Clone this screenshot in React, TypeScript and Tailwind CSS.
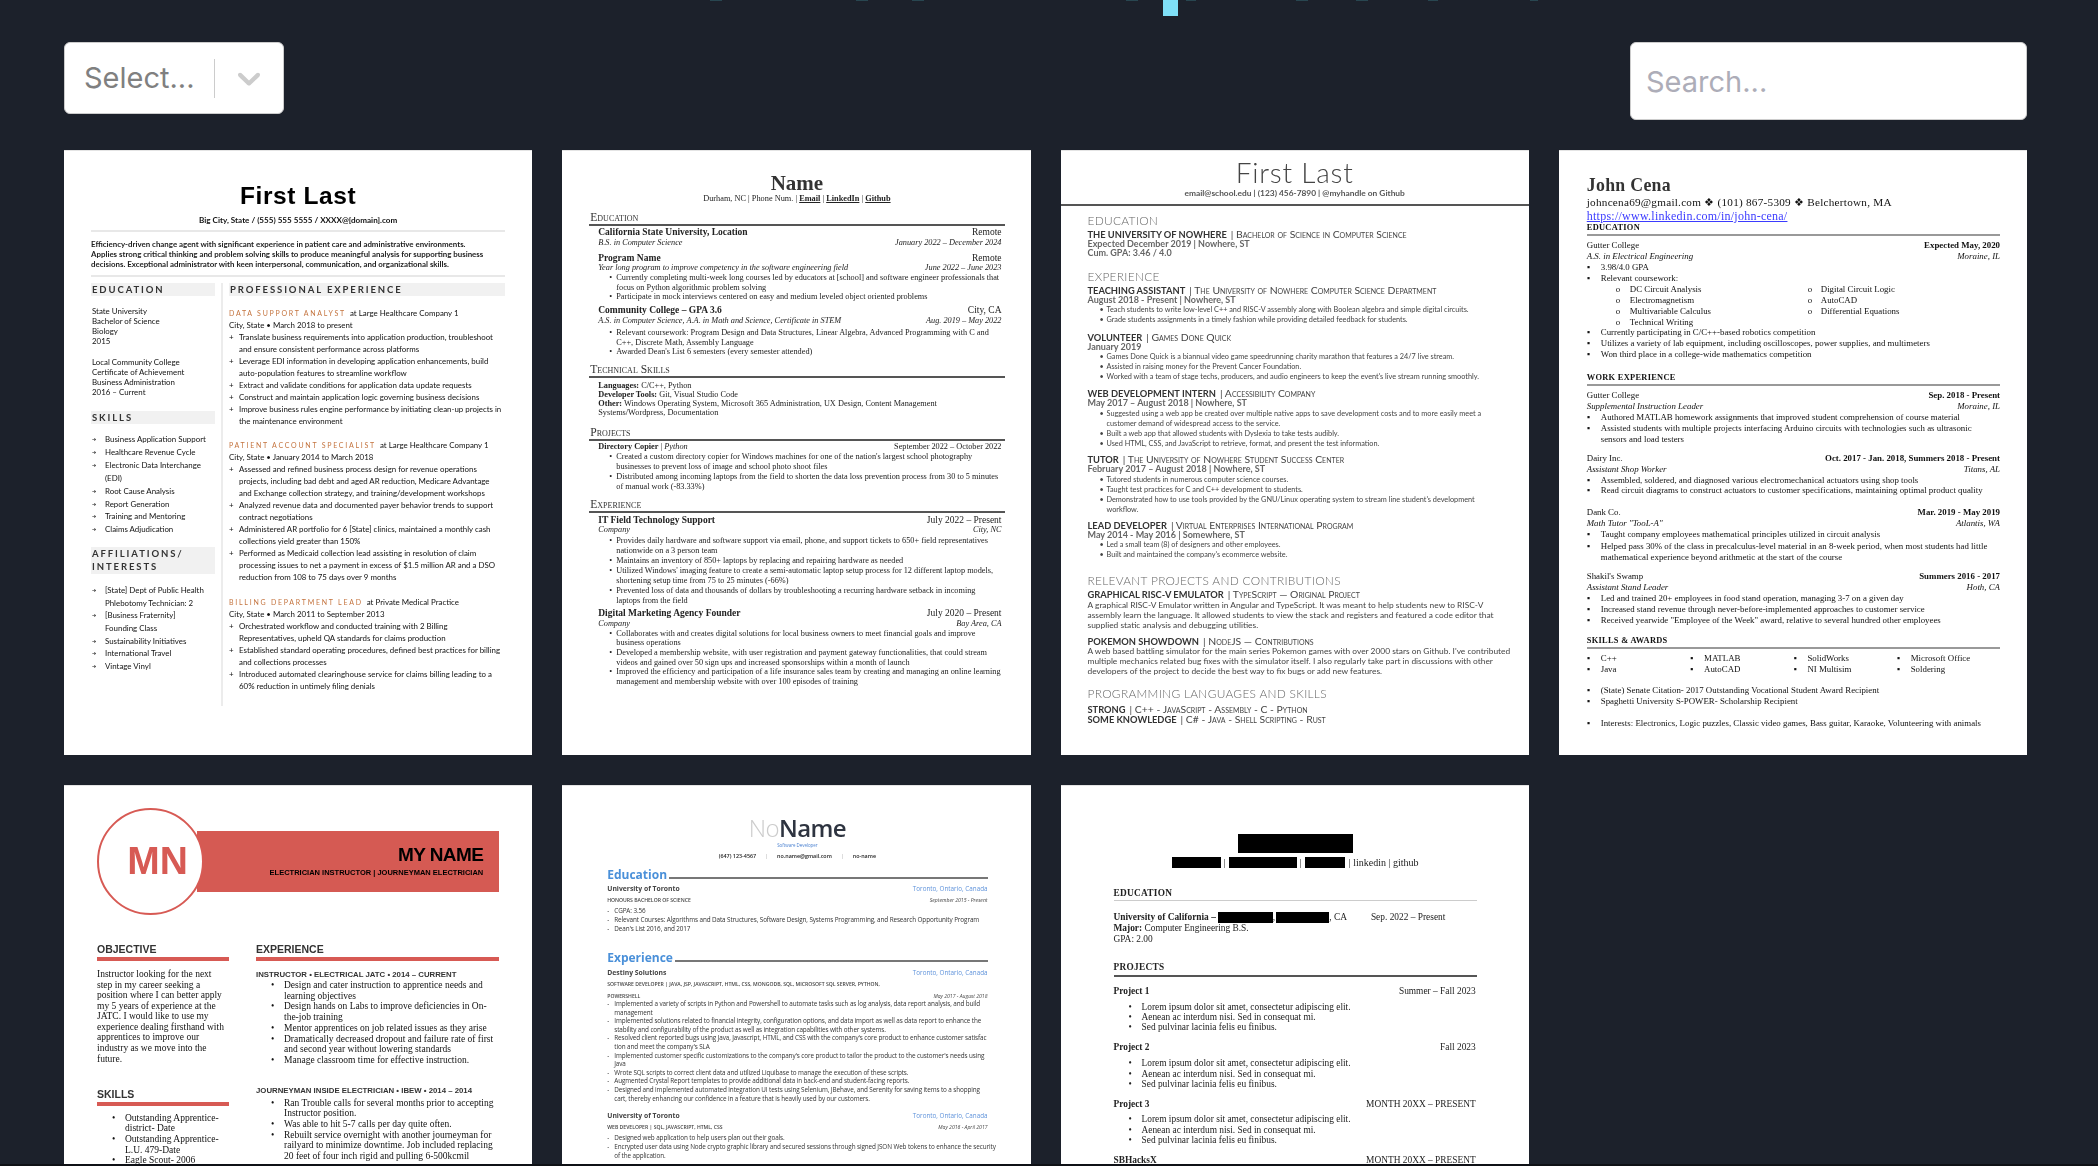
import type { ReactNode } from 'react';

type BulletProps = {
  items: string[][];
  mark?: ReactNode;
  markClass: string;
  className?: string;
};

// one bullet per entry, each entry holds the wrapped lines of the scan
function Bullets({ items, mark = '•', markClass, className = '' }: BulletProps) {
  return (
    <div className={className}>
      {items.map((lines) => (
        <div key={lines[0]} className="flex">
          <div className={`shrink-0 ${markClass}`}>{mark}</div>
          <div>
            {lines.map((line) => (
              <div key={line}>{line}</div>
            ))}
          </div>
        </div>
      ))}
    </div>
  );
}

function Split({ left, right, className = '' }: { left: ReactNode; right: ReactNode; className?: string }) {
  return (
    <div className={`flex justify-between ${className}`}>
      <div>{left}</div>
      <div>{right}</div>
    </div>
  );
}

function Card({ children }: { children: ReactNode }) {
  return (
    <div className="h-[605px] overflow-hidden bg-white border-t border-[#e4e4e4]">
      <div className="h-full blur-[0.5px] whitespace-nowrap text-[#111]">{children}</div>
    </div>
  );
}

function FirstLastHealth() {
  const SideBar = ({ children, className = '' }: { children: ReactNode; className?: string }) => (
    <div className={`bg-[#f1f1f1] font-bold text-[9.5px] leading-[13px] tracking-[1.9px] text-[#333] pl-[1px] ${className}`}>
      {children}
    </div>
  );
  const Job = ({ title, at, place, className = '' }: { title: string; at: string; place: string; className?: string }) => (
    <div className={className}>
      <div>
        <span className="text-[#c4743f] tracking-[1.75px] text-[7px] mr-[4px]">{title}</span>
        {at}
      </div>
      <div>{place}</div>
    </div>
  );
  return (
    <div className="pt-[30px] px-[27px] font-['Lato',sans-serif] text-[7.9px]">
      <div className="text-center font-['Liberation_Sans',sans-serif] font-bold text-[24.5px] leading-[30px] tracking-[0.6px] text-black">First Last</div>
      <div className="mt-[4px] text-center leading-[10px] text-[8.1px] font-bold">Big City, State / (555) 555 5555 / XXXX@[domain].com</div>
      <div className="mt-[5px] h-[2px] bg-[#e8e8e8]" />
      <div className="mt-[7px] leading-[10px] text-[7.9px] font-bold text-[#222]">
        <div>Efficiency-driven change agent with significant experience in patient care and administrative environments.</div>
        <div>Applies strong critical thinking and problem solving skills to produce meaningful analysis for supporting business</div>
        <div>decisions. Exceptional administrator with keen interpersonal, communication, and organizational skills.</div>
      </div>
      <div className="mt-[6px] h-[2px] bg-[#e8e8e8]" />
      <div className="mt-[6px] flex">
        <div className="w-[124px] shrink-0">
          <SideBar>EDUCATION</SideBar>
          <div className="mt-[10px] leading-[10px] pl-[1px]">
            <div>State University</div>
            <div>Bachelor of Science</div>
            <div>Biology</div>
            <div>2015</div>
            <div className="mt-[11px]">Local Community College</div>
            <div>Certificate of Achievement</div>
            <div>Business Administration</div>
            <div>2016 – Current</div>
          </div>
          <SideBar className="mt-[14px]">SKILLS</SideBar>
          <Bullets
            className="mt-[9px] leading-[12.9px]"
            mark="➔"
            markClass="w-[14px] text-[5px] pl-[1px]"
            items={[
              ['Business Application Support'],
              ['Healthcare Revenue Cycle'],
              ['Electronic Data Interchange', '(EDI)'],
              ['Root Cause Analysis'],
              ['Report Generation'],
              ['Training and Mentoring'],
              ['Claims Adjudication'],
            ]}
          />
          <SideBar className="mt-[11px] h-[27px]">
            AFFILIATIONS/
            <br />
            INTERESTS
          </SideBar>
          <Bullets
            className="mt-[10px] leading-[12.6px]"
            mark="➔"
            markClass="w-[14px] text-[5px] pl-[1px]"
            items={[
              ['[State] Dept of Public Health', 'Phlebotomy Technician: 2'],
              ['[Business Fraternity]', 'Founding Class'],
              ['Sustainability Initiatives'],
              ['International Travel'],
              ['Vintage Vinyl'],
            ]}
          />
        </div>
        <div className="ml-[6px] mr-[6px] w-[2px] h-[423px] bg-[#ececec] shrink-0" />
        <div className="flex-1 leading-[12px]">
          <SideBar>PROFESSIONAL EXPERIENCE</SideBar>
          <Job className="mt-[11px]" title="DATA SUPPORT ANALYST" at="at Large Healthcare Company 1" place="City, State • March 2018 to present" />
          <Bullets
            mark="+"
            markClass="w-[10px]"
            items={[
              ['Translate business requirements into application production, troubleshoot', 'and ensure consistent performance across platforms'],
              ['Leverage EDI information in developing application enhancements, build', 'auto-population features to streamline workflow'],
              ['Extract and validate conditions for application data update requests'],
              ['Construct and maintain application logic governing business decisions'],
              ['Improve business rules engine performance by initiating clean-up projects in', 'the maintenance environment'],
            ]}
          />
          <Job className="mt-[12px]" title="PATIENT ACCOUNT SPECIALIST" at="at Large Healthcare Company 1" place="City, State • January 2014 to March 2018" />
          <Bullets
            mark="+"
            markClass="w-[10px]"
            items={[
              ['Assessed and refined business process design for revenue operations', 'projects, including bad debt and aged AR reduction, Medicare Advantage', 'and Exchange collection strategy, and training/development workshops'],
              ['Analyzed revenue data and documented payer behavior trends to support', 'contract negotiations'],
              ['Administered AR portfolio for 6 [State] clinics, maintained a monthly cash', 'collections yield greater than 150%'],
              ['Performed as Medicaid collection lead assisting in resolution of claim', 'processing issues to net a payment in excess of $1.5 million AR and a DSO', 'reduction from 108 to 75 days over 9 months'],
            ]}
          />
          <Job className="mt-[13px]" title="BILLING DEPARTMENT LEAD" at="at Private Medical Practice" place="City, State • March 2011 to September 2013" />
          <Bullets
            mark="+"
            markClass="w-[10px]"
            items={[
              ['Orchestrated workflow and conducted training with 2 Billing', 'Representatives, upheld QA standards for claims production'],
              ['Established standard operating procedures, defined best practices for billing', 'and collections processes'],
              ['Introduced automated clearinghouse service for claims billing leading to a', '60% reduction in untimely filing denials'],
            ]}
          />
        </div>
      </div>
    </div>
  );
}

function NameLatex() {
  const Head = ({ children, className = '' }: { children: ReactNode; className?: string }) => (
    <div className={className}>
      <div className="h-[10px] leading-[10px] pl-[1px] text-[11.6px] [font-variant-caps:small-caps] text-[#333]">{children}</div>
      <div className="mt-[1px] h-[2px] bg-[#555]" />
    </div>
  );
  return (
    <div className="pt-[22px] pl-[27px] pr-[26px] font-['Liberation_Serif',serif] text-[8.28px] text-[#222]">
      <div className="text-center text-[21px] leading-[21px] font-bold text-[#333]">Name</div>
      <div className="text-center leading-[10px] text-[8.3px]">
        Durham, NC | Phone Num. | <u className="font-bold">Email</u> | <u className="font-bold">LinkedIn</u> | <u className="font-bold">Github</u>
      </div>
      <Head className="mt-[9px]">Education</Head>
      <div className="pl-[9px] pr-[3px] leading-[10px]">
        <Split className="mt-[1px] font-bold text-[9.5px]" left="California State University, Location" right={<span className="font-normal">Remote</span>} />
        <Split className="mt-[1px] italic" left="B.S. in Computer Science" right="January 2022 – December 2024" />
        <Split className="mt-[5px] font-bold text-[9.5px]" left="Program Name" right={<span className="font-normal">Remote</span>} />
        <Split className="italic" left="Year long program to improve competency in the software engineering field" right="June 2022 – June 2023" />
        <Bullets
          className="leading-[9.7px]"
          markClass="w-[18px] pl-[11px]"
          items={[
            ['Currently completing multi-week long courses led by educators at [school] and software engineer professionals that', 'focus on Python algorithmic problem solving'],
            ['Participate in mock interviews centered on easy and medium leveled object oriented problems'],
          ]}
        />
        <Split className="mt-[3px] font-bold text-[9.5px]" left="Community College – GPA 3.6" right={<span className="font-normal">City, CA</span>} />
        <Split className="mt-[1px] italic" left="A.S. in Computer Science, A.A. in Math and Science, Certificate in STEM" right="Aug. 2019 – May 2022" />
        <Bullets
          className="mt-[2px] leading-[9.6px]"
          markClass="w-[18px] pl-[11px]"
          items={[
            ['Relevant coursework: Program Design and Data Structures, Linear Algebra, Advanced Programming with C and', 'C++, Discrete Math, Assembly Language'],
            ['Awarded Dean\'s List 6 semesters (every semester attended)'],
          ]}
        />
      </div>
      <Head className="mt-[8px]">Technical Skills</Head>
      <div className="pl-[9px] mt-[3px] leading-[9px]">
        <div><b>Languages:</b> C/C++, Python</div>
        <div><b>Developer Tools:</b> Git, Visual Studio Code</div>
        <div><b>Other:</b> Windows Operating System, Microsoft 365 Administration, UX Design, Content Management</div>
        <div>Systems/Wordpress, Documentation</div>
      </div>
      <Head className="mt-[11px]">Projects</Head>
      <div className="pl-[9px] pr-[3px] leading-[10px]">
        <Split className="mt-[1px]" left={<span><b>Directory Copier</b> | <i>Python</i></span>} right="September 2022 – October 2022" />
        <Bullets
          markClass="w-[18px] pl-[11px]"
          items={[
            ['Created a custom directory copier for Windows machines for one of the nation\'s largest school photography', 'businesses to prevent loss of image and school photo shoot files'],
            ['Distributed among incoming laptops from the field to shorten the data loss prevention process from 30 to 5 minutes', 'of manual work (-83.33%)'],
          ]}
        />
      </div>
      <Head className="mt-[8px]">Experience</Head>
      <div className="pl-[9px] pr-[3px] leading-[10px]">
        <Split className="mt-[2px] font-bold text-[9.5px]" left="IT Field Technology Support" right={<span className="font-normal">July 2022 – Present</span>} />
        <Split className="italic" left="Company" right="City, NC" />
        <Bullets
          className="mt-[1px]"
          markClass="w-[18px] pl-[11px]"
          items={[
            ['Provides daily hardware and software support via email, phone, and support tickets to 650+ field representatives', 'nationwide on a 3 person team'],
            ['Maintains an inventory of 850+ laptops by replacing and repairing hardware as needed'],
            ['Utilized Windows\' imaging feature to create a semi-automatic laptop setup process for 12 different laptop models,', 'shortening setup time from 75 to 25 minutes (-66%)'],
            ['Prevented loss of data and thousands of dollars by troubleshooting a recurring hardware setback in incoming', 'laptops from the field'],
          ]}
        />
        <Split className="mt-[2px] font-bold text-[9.5px]" left="Digital Marketing Agency Founder" right={<span className="font-normal">July 2020 – Present</span>} />
        <Split className="mt-[1px] italic" left="Company" right="Bay Area, CA" />
        <Bullets
          className="leading-[9.6px]"
          markClass="w-[18px] pl-[11px]"
          items={[
            ['Collaborates with and creates digital solutions for local business owners to meet financial goals and improve', 'business operations'],
            ['Developed a membership website, with user registration and payment gateway functionalities, that could stream', 'videos and gained over 50 sign ups and increased sponsorships within a month of launch'],
            ['Improved the efficiency and participation of a life insurance sales team by creating and managing an online learning', 'management and membership website with over 100 episodes of training'],
          ]}
        />
      </div>
    </div>
  );
}

function FirstLastLight() {
  const Big = ({ children, className = '' }: { children: ReactNode; className?: string }) => (
    <div className={`text-[11.9px] leading-[14px] font-light tracking-[0.3px] text-[#666] ${className}`}>{children}</div>
  );
  const Head = ({ name, sub }: { name: string; sub: string }) => (
    <div className="h-[9px] leading-[9px]">
      <b className="text-[9.3px] text-[#333]">{name}</b>
      <span className="ml-[4px] text-[10.4px] [font-variant-caps:small-caps]">| {sub}</span>
    </div>
  );
  const When = ({ children }: { children: ReactNode }) => (
    <div className="leading-[9px] text-[9px] font-bold text-[#666]">{children}</div>
  );
  const Job = ({ name, sub, when, items, className = '' }: { name: string; sub: string; when: string; items: string[][]; className?: string }) => (
    <div className={className}>
      <Head name={name} sub={sub} />
      <When>{when}</When>
      <Bullets className="mt-[1.5px] leading-[10px] text-[7.3px]" markClass="w-[19px] pl-[12px]" items={items} />
    </div>
  );
  return (
    <div className="pt-[7px] font-['Lato',sans-serif] text-[7px] text-[#444]">
      <div className="text-center text-[28px] leading-[28px] font-light tracking-[0.8px] text-[#444]">First Last</div>
      <div className="mt-[2px] text-center text-[8.4px] leading-[10px] font-bold text-[#555]">email@school.edu | (123) 456-7890 | @myhandle on Github</div>
      <div className="mt-[6px] h-[2px] bg-[#555]" />
      <div className="pl-[27px] mt-[8px]">
        <Big>EDUCATION</Big>
        <div className="mt-[2px]">
          <Head name="THE UNIVERSITY OF NOWHERE" sub="Bachelor of Science in Computer Science" />
          <When>Expected December 2019 | Nowhere, ST</When>
          <When>Cum. GPA: 3.46 / 4.0</When>
        </div>
        <Big className="mt-[13px]">EXPERIENCE</Big>
        <Job
          className="mt-[1.5px]"
          name="TEACHING ASSISTANT"
          sub="The University of Nowhere Computer Science Department"
          when="August 2018 - Present | Nowhere, ST"
          items={[
            ['Teach students to write low-level C++ and RISC-V assembly along with Boolean algebra and simple digital circuits.'],
            ['Grade students assignments in a timely fashion while providing detailed feedback for students.'],
          ]}
        />
        <Job
          className="mt-[7.5px]"
          name="VOLUNTEER"
          sub="Games Done Quick"
          when="January 2019"
          items={[
            ['Games Done Quick is a biannual video game speedrunning charity marathon that features a 24/7 live stream.'],
            ['Assisted in raising money for the Prevent Cancer Foundation.'],
            ['Worked with a team of stage techs, producers, and audio engineers to keep the event\'s live stream running smoothly.'],
          ]}
        />
        <Job
          className="mt-[7px]"
          name="WEB DEVELOPMENT INTERN"
          sub="Accessibility Company"
          when="May 2017 – August 2018 | Nowhere, ST"
          items={[
            ['Suggested using a web app be created over multiple native apps to save development costs and to more easily meet a', 'customer demand of widespread access to the service.'],
            ['Built a web app that allowed students with Dyslexia to take tests audibly.'],
            ['Used HTML, CSS, and JavaScript to retrieve, format, and present the test information.'],
          ]}
        />
        <Job
          className="mt-[6.5px]"
          name="TUTOR"
          sub="The University of Nowhere Student Success Center"
          when="February 2017 – August 2018 | Nowhere, ST"
          items={[
            ['Tutored students in numerous computer science courses.'],
            ['Taught test practices for C and C++ development to students.'],
            ['Demonstrated how to use tools provided by the GNU/Linux operating system to stream line student\'s development', 'workflow.'],
          ]}
        />
        <Job
          className="mt-[6px]"
          name="LEAD DEVELOPER"
          sub="Virtual Enterprises International Program"
          when="May 2014 - May 2016 | Somewhere, ST"
          items={[
            ['Led a small team (8) of designers and other employees.'],
            ['Built and maintained the company\'s ecommerce website.'],
          ]}
        />
        <Big className="mt-[13.5px]">RELEVANT PROJECTS AND CONTRIBUTIONS</Big>
        <div className="mt-[2px]">
          <Head name="GRAPHICAL RISC-V EMULATOR" sub="TypeScript — Original Project" />
          <div className="leading-[10px] text-[8.4px] mt-[1px]">
            <div>A graphical RISC-V Emulator written in Angular and TypeScript. It was meant to help students new to RISC-V</div>
            <div>assembly learn the language. It allowed students to view the stack and registers and featured a code editor that</div>
            <div>supplied static analysis and debugging utilities.</div>
          </div>
        </div>
        <div className="mt-[7.5px]">
          <Head name="POKEMON SHOWDOWN" sub="NodeJS — Contributions" />
          <div className="leading-[10px] text-[8.4px]">
            <div>A web based battling simulator for the main series Pokemon games with over 2000 stars on Github. I've contributed</div>
            <div>multiple mechanics related bug fixes with the simulator itself. I also regularly take part in discussions with other</div>
            <div>developers of the project to decide the best way to fix bugs or add new features.</div>
          </div>
        </div>
        <Big className="mt-[11px]">PROGRAMMING LANGUAGES AND SKILLS</Big>
        <div className="mt-[4px]">
          <Head name="STRONG" sub="C++ - JavaScript - Assembly - C - Python" />
          <div className="mt-[0.5px]">
            <Head name="SOME KNOWLEDGE" sub="C# - Java - Shell Scripting - Rust" />
          </div>
        </div>
      </div>
    </div>
  );
}

function JohnCena() {
  const Head = ({ children, className = '' }: { children: ReactNode; className?: string }) => (
    <div className={className}>
      <div className="font-bold text-[8.4px] leading-[9px] tracking-[0.3px]">{children}</div>
      <div className="mt-[2px] h-[1.5px] bg-[#999]" />
    </div>
  );
  return (
    <div className="pt-[24px] pl-[28px] pr-[27px] font-['Liberation_Serif',serif] text-[8.85px]">
      <div className="text-[17.8px] leading-[20px] font-bold text-[#333] tracking-[0.3px]">John Cena</div>
      <div className="text-[11.2px] leading-[14px] tracking-[0.25px]">johncena69@gmail.com ❖ (101) 867-5309 ❖ Belchertown, MA</div>
      <div className="text-[12px] leading-[14px] text-[#3b3bff] underline tracking-[0.25px]">https://www.linkedin.com/in/john-cena/</div>
      <Head>EDUCATION</Head>
      <Split className="mt-[4.5px] leading-[11px]" left="Gutter College" right={<b>Expected May, 2020</b>} />
      <Split className="leading-[11px] italic" left="A.S. in Electrical Engineering" right="Moraine, IL" />
      <Bullets
        className="leading-[11.1px]"
        mark="▪"
        markClass="w-[14px]"
        items={[
          ['3.98/4.0 GPA'],
          ['Relevant coursework:'],
        ]}
      />
      <div className="flex leading-[10.8px]">
        <Bullets
          className="w-[221px]"
          mark="o"
          markClass="w-[14px] pl-[29px] box-content"
          items={[['DC Circuit Analysis'], ['Electromagnetism'], ['Multivariable Calculus'], ['Technical Writing']]}
        />
        <Bullets
          mark="o"
          markClass="w-[13px]"
          items={[['Digital Circuit Logic'], ['AutoCAD'], ['Differential Equations']]}
        />
      </div>
      <Bullets
        className="leading-[11px]"
        mark="▪"
        markClass="w-[14px]"
        items={[
          ['Currently participating in C/C++-based robotics competition'],
          ['Utilizes a variety of lab equipment, including oscilloscopes, power supplies, and multimeters'],
          ['Won third place in a college-wide mathematics competition'],
        ]}
      />
      <Head className="mt-[13px]">WORK EXPERIENCE</Head>
      <Split className="mt-[4px] leading-[11px]" left="Gutter College" right={<b>Sep. 2018 - Present</b>} />
      <Split className="leading-[11px] italic" left="Supplemental Instruction Leader" right="Moraine, IL" />
      <Bullets
        className="leading-[11px]"
        mark="▪"
        markClass="w-[14px]"
        items={[
          ['Authored MATLAB homework assignments that improved student comprehension of course material'],
          ['Assisted students with multiple projects interfacing Arduino circuits with technologies such as ultrasonic', 'sensors and load testers'],
        ]}
      />
      <Split className="mt-[8px] leading-[11px]" left="Dairy Inc." right={<b>Oct. 2017 - Jan. 2018, Summers 2018 - Present</b>} />
      <Split className="leading-[11px] italic" left="Assistant Shop Worker" right="Titans, AL" />
      <Bullets
        className="leading-[10.5px]"
        mark="▪"
        markClass="w-[14px]"
        items={[
          ['Assembled, soldered, and diagnosed various electromechanical actuators using shop tools'],
          ['Read circuit diagrams to construct actuators to customer specifications, maintaining optimal product quality'],
        ]}
      />
      <Split className="mt-[11.5px] leading-[11px]" left="Dank Co." right={<b>Mar. 2019 - May 2019</b>} />
      <Split className="leading-[11px] italic" left='Math Tutor "TooL-A"' right="Atlantis, WA" />
      <Bullets
        className="leading-[11.5px]"
        mark="▪"
        markClass="w-[14px]"
        items={[
          ['Taught company employees mathematical principles utilized in circuit analysis'],
          ['Helped pass 30% of the class in precalculus-level material in an 8-week period, when most students had little', 'mathematical experience beyond arithmetic at the start of the course'],
        ]}
      />
      <Split className="mt-[7.5px] leading-[11px]" left="Shakil's Swamp" right={<b>Summers 2016 - 2017</b>} />
      <Split className="leading-[11px] italic" left="Assistant Stand Leader" right="Hoth, CA" />
      <Bullets
        className="leading-[11px]"
        mark="▪"
        markClass="w-[14px]"
        items={[
          ['Led and trained 20+ employees in food stand operation, managing 3-7 on a given day'],
          ['Increased stand revenue through never-before-implemented approaches to customer service'],
          ['Received yearwide "Employee of the Week" award, relative to several hundred other employees'],
        ]}
      />
      <Head className="mt-[10px]">SKILLS &amp; AWARDS</Head>
      <div className="mt-[4px] grid grid-cols-4 leading-[11px]">
        {[['C++', 'MATLAB', 'SolidWorks', 'Microsoft Office'], ['Java', 'AutoCAD', 'NI Multisim', 'Soldering']].flat().map((skill) => (
          <div key={skill} className="flex">
            <div className="w-[14px]">▪</div>
            {skill}
          </div>
        ))}
      </div>
      <Bullets
        className="mt-[10px] leading-[11px]"
        mark="▪"
        markClass="w-[14px]"
        items={[
          ['(State) Senate Citation- 2017 Outstanding Vocational Student Award Recipient'],
          ['Spaghetti University S-POWER- Scholarship Recipient'],
        ]}
      />
      <Bullets
        className="mt-[11px] leading-[11px]"
        mark="▪"
        markClass="w-[14px]"
        items={[['Interests: Electronics, Logic puzzles, Classic video games, Bass guitar, Karaoke, Volunteering with animals']]}
      />
    </div>
  );
}

function MyName() {
  const Head = ({ children, className = '' }: { children: ReactNode; className?: string }) => (
    <div className={className}>
      <div className="font-['Liberation_Sans',sans-serif] font-bold text-[10.5px] leading-[12px] text-[#333]">{children}</div>
      <div className="mt-[2px] h-[4px] bg-[#d75a54]" />
    </div>
  );
  return (
    <div className="pt-[22px] font-['Liberation_Serif',serif] text-[9.5px]">
      <div className="flex items-center pl-[33px] pr-[33px]">
        <div className="relative z-10 w-[107px] h-[107px] shrink-0 rounded-full bg-white border-2 border-[#d75a54] flex items-center justify-center pl-[14px] font-['Liberation_Sans',sans-serif] font-bold text-[39px] text-[#d75a54]">
          MN
        </div>
        <div className="flex-1 -ml-[7px] h-[61px] bg-[#d55a53] text-right pr-[16px] pt-[14px] font-['Liberation_Sans',sans-serif] font-bold text-black">
          <div className="text-[19px] leading-[20px] tracking-[-0.6px]">MY NAME</div>
          <div className="text-[7.5px] leading-[11px] mt-[2px]">ELECTRICIAN INSTRUCTOR | JOURNEYMAN ELECTRICIAN</div>
        </div>
      </div>
      <div className="mt-[28px] pl-[33px] pr-[33px] flex gap-[27px]">
        <div className="w-[132px] shrink-0">
          <Head>OBJECTIVE</Head>
          <div className="mt-[8px] leading-[10.5px]">
            <div>Instructor looking for the next</div>
            <div>step in my career seeking a</div>
            <div>position where I can better apply</div>
            <div>my 5 years of experience at the</div>
            <div>JATC.  I would like to use my</div>
            <div>experience dealing firsthand with</div>
            <div>apprentices to improve our</div>
            <div>industry as we move into the</div>
            <div className="mt-[1px]">future.</div>
          </div>
          <Head className="mt-[23px]">SKILLS</Head>
          <Bullets
            className="mt-[7px] leading-[10.7px]"
            markClass="w-[28px] pl-[15px]"
            items={[
              ['Outstanding Apprentice-', 'district- Date'],
              ['Outstanding Apprentice-', 'L.U. 479-Date'],
              ['Eagle Scout- 2006'],
            ]}
          />
        </div>
        <div className="flex-1 min-w-0">
          <Head>EXPERIENCE</Head>
          <div className="mt-[9px] leading-[10px] font-['Liberation_Sans',sans-serif] text-[7.8px] font-bold text-[#333]">INSTRUCTOR  •  ELECTRICAL JATC  •  2014 – CURRENT</div>
          <Bullets
            className="leading-[10.7px]"
            markClass="w-[28px] pl-[15px]"
            items={[
              ['Design and cater instruction to apprentice needs and', 'learning objectives'],
              ['Design hands on Labs to improve deficiencies in On-', 'the-job training'],
              ['Mentor apprentices on job related issues as they arise'],
              ['Dramatically decreased dropout and failure rate of first', 'and second year without lowering standards'],
              ['Manage classroom time for effective instruction.'],
            ]}
          />
          <div className="mt-[20px] leading-[10px] font-['Liberation_Sans',sans-serif] text-[7.8px] font-bold text-[#333]">JOURNEYMAN INSIDE ELECTRICIAN  •  IBEW  •  2014 – 2014</div>
          <Bullets
            className="mt-[2px] leading-[10.7px]"
            markClass="w-[28px] pl-[15px]"
            items={[
              ['Ran Trouble calls  for several months prior to accepting', 'Instructor position.'],
              ['Was able to hit 5-7 calls per day quite often.'],
              ['Rebuilt service overnight with another journeyman for', 'railyard to minimize downtime. Job included replacing', '20 feet of four inch rigid and pulling 6-500kcmil'],
            ]}
          />
        </div>
      </div>
    </div>
  );
}

function NoName() {
  const Head = ({ children, className = '' }: { children: ReactNode; className?: string }) => (
    <div className={`flex items-end gap-[2px] ${className}`}>
      <div className="text-[12px] leading-[15px] font-bold text-[#4a90d9]">{children}</div>
      <div className="flex-1 h-[1.5px] bg-[#777] mb-[3px]" />
    </div>
  );
  const Place = () => <span className="text-[6.3px] font-normal text-[#5f93db]">Toronto, Ontario, Canada</span>;
  const Meta = ({ left, right, className = '' }: { left: string; right: string; className?: string }) => (
    <Split className={`leading-[8px] text-[5.1px] font-semibold text-[#444] ${className}`} left={left} right={<span className="font-normal italic">{right}</span>} />
  );
  return (
    <div className="pt-[28px] pl-[45px] pr-[43px] font-['Open_Sans',sans-serif] text-[6.35px] text-[#333]">
      <div className="text-center text-[24px] leading-[28px] tracking-[-0.6px]">
        <span className="font-light text-[#ccc]">No</span>
        <span className="font-semibold text-[#2e3440]">Name</span>
      </div>
      <div className="text-center text-[4.4px] leading-[6px] text-[#4a80d0]">Software Developer</div>
      <div className="mt-[4.5px] flex justify-center gap-[9px] text-[5.4px] leading-[7px] text-[#222] font-semibold">
        <span>(647) 123-4567</span>
        <span className="text-[#bbb]">|</span>
        <span>no.name@gmail.com</span>
        <span className="text-[#bbb]">|</span>
        <span>no-name</span>
      </div>
      <Head className="mt-[7px]">Education</Head>
      <Split className="mt-[2.5px] leading-[10px] font-bold text-[6.8px] text-[#444]" left="University of Toronto" right={<Place />} />
      <Meta className="mt-[2px]" left="HONOURS BACHELOR OF SCIENCE" right="September 2015 - Present" />
      <Bullets
        className="mt-[1.5px] leading-[9px] tracking-[-0.1px]"
        mark="-"
        markClass="w-[7px]"
        items={[['CGPA: 3.56'], ['Relevant Courses: Algorithms and Data Structures, Software Design, Systems Programming, and Research Opportunity Program'], ['Dean\'s List 2016, and 2017']]}
      />
      <Head className="mt-[17px]">Experience</Head>
      <Split className="mt-[3.5px] leading-[10px] font-bold text-[6.8px] text-[#444]" left="Destiny Solutions" right={<Place />} />
      <Meta className="mt-[2px]" left="SOFTWARE DEVELOPER | JAVA, JSP, JAVASCRIPT, HTML, CSS, MONGODB, SQL, MICROSOFT SQL SERVER, PYTHON," right="" />
      <Meta className="mt-[4px]" left="POWERSHELL" right="May 2017 - August 2018" />
      <Bullets
        className="leading-[8.6px] tracking-[-0.1px]"
        mark="-"
        markClass="w-[7px]"
        items={[
          ['Implemented a variety of scripts in Python and Powershell to automate tasks such as log analysis, data report analysis, and build', 'management'],
          ['Implemented solutions related to financial integrity, configuration options, and data import as well as data report to enhance the', 'stability and configurability of the product as well as integration capabilities with other systems.'],
          ['Resolved client reported bugs using Java, Javascript, HTML, and CSS with the company\'s core product to enhance customer satisfac', 'tion and meet the company\'s SLA'],
          ['Implemented customer specific customizations to the company\'s core product to tailor the product to the customer\'s needs using', 'Java'],
          ['Wrote SQL scripts to correct client data and utilized Liquibase to manage the execution of these scripts.'],
          ['Augmented Crystal Report templates to provide additional data in back-end and student-facing reports.'],
          ['Designed and implemented automated integration UI tests using Selenium, JBehave, and Serenity for saving items to a shopping', 'cart, thereby enhancing our confidence in a feature that is heavily used by our customers.'],
        ]}
      />
      <Split className="mt-[8px] leading-[10px] font-bold text-[6.8px] text-[#444]" left="University of Toronto" right={<Place />} />
      <Meta className="mt-[2px]" left="WEB DEVELOPER | SQL, JAVASCRIPT, HTML, CSS" right="May 2016 - April 2017" />
      <Bullets
        className="mt-[1.5px] leading-[9px] tracking-[-0.1px]"
        mark="-"
        markClass="w-[7px]"
        items={[
          ['Designed web application to help users plan out their goals.'],
          ['Encrypted user data using Node crypto graphic library and secured sessions through signed JSON Web tokens to enhance the security', 'of the application.'],
        ]}
      />
    </div>
  );
}

function Redacted() {
  const Head = ({ children, rule, className = '' }: { children: ReactNode; rule: string; className?: string }) => (
    <div className={className}>
      <div className="font-bold text-[9.3px] leading-[11px] tracking-[0.3px]">{children}</div>
      <div className={rule} />
    </div>
  );
  const lorem = [
    ['Lorem ipsum dolor sit amet, consectetur adipiscing elit.'],
    ['Aenean ac interdum nisi. Sed in consequat mi.'],
    ['Sed pulvinar lacinia felis eu finibus.'],
  ];
  const Project = ({ name, when, className = '', listClass }: { name: string; when: string; className?: string; listClass: string }) => (
    <div className={className}>
      <Split className="leading-[11px] pr-[1px]" left={<b>{name}</b>} right={when} />
      <Bullets className={listClass} markClass="w-[28px] pl-[15px]" items={lorem} />
    </div>
  );
  return (
    <div className="pt-[48px] pl-[53px] pr-[52px] font-['Liberation_Serif',serif] text-[9.4px] text-[#222]">
      <div className="w-[115px] h-[19px] bg-black mx-auto" />
      <div className="mt-[4px] h-[11px] flex items-center justify-center text-[10px]">
        <div className="w-[49px] h-full bg-black" />
        <span className="mx-[3px]">|</span>
        <div className="w-[68px] h-full bg-black" />
        <span className="mx-[3px]">|</span>
        <div className="w-[40px] h-full bg-black" />
        <span className="ml-[4px]">| linkedin |  github</span>
      </div>
      <Head className="mt-[19.5px]" rule="mt-[1.5px] h-[1px] bg-[#ccc]">EDUCATION</Head>
      <div className="mt-[11px] flex items-center leading-[11px]">
        <b>University of California –</b>
        <div className="ml-[2px] w-[55px] h-[11px] bg-black" />
        <span>,</span>
        <div className="ml-[1px] w-[53px] h-[11px] bg-black" />
        <span>, CA</span>
        <span className="ml-[24px]">Sep. 2022 – Present</span>
      </div>
      <div className="leading-[10.5px]">
        <div><b>Major:</b> Computer Engineering B.S.</div>
        <div>GPA: 2.00</div>
      </div>
      <Head className="mt-[18px]" rule="mt-[2px] h-[1.5px] bg-[#555]">PROJECTS</Head>
      <Project className="mt-[9.5px]" name="Project 1" when="Summer – Fall 2023" listClass="mt-[4.5px] leading-[10.3px]" />
      <Project className="mt-[9.5px]" name="Project 2" when="Fall 2023" listClass="mt-[5.5px] leading-[10.3px]" />
      <Project className="mt-[9.5px]" name="Project 3" when="MONTH 20XX – PRESENT" listClass="mt-[4.5px] leading-[10.3px]" />
      <Split className="mt-[9.5px] leading-[11px] pr-[1px]" left={<b>SBHacksX</b>} right="MONTH 20XX – PRESENT" />
    </div>
  );
}

export default function App() {
  return (
    <div className="h-screen overflow-hidden bg-[#1c212b] border-b-2 border-[#0f1116] font-['Inter',sans-serif]">
      {/* bottoms of the page title, the rest is scrolled off the top */}
      <svg width="2098" height="16" className="block" aria-hidden="true">
        <g fill="#284650">
          <rect x="710" y="0" width="12" height="1" />
          <rect x="856" y="0" width="12" height="1" />
          <rect x="912" y="0" width="12" height="1" />
          <rect x="1126" y="0" width="12" height="1" />
          <rect x="1186" y="0" width="10" height="1" />
          <rect x="1296" y="0" width="12" height="1" />
          <rect x="1356" y="0" width="12" height="1" />
          <rect x="1428" y="0" width="10" height="1" />
          <rect x="1530" y="0" width="8" height="1" />
        </g>
        <rect x="1163" y="0" width="15" height="16" fill="#7fe0f7" />
      </svg>
      <div className="mt-[26px] pl-[64px] pr-[71px] flex justify-between items-start">
        <div className="w-[220px] h-[72px] flex items-center bg-white rounded-[6px] border border-[#ccc]">
          <div className="w-[149px] pl-[19px] text-[29px] text-[#808080]">Select...</div>
          <div className="w-px h-[39px] bg-[#ccc]" />
          <svg viewBox="0 0 20 20" width="38" height="38" fill="#ccc" className="ml-[15px]" aria-hidden="true">
            <path d="M4.516 7.548c0.436-0.446 1.043-0.481 1.576 0l3.908 3.747 3.908-3.747c0.533-0.481 1.141-0.446 1.574 0 0.436 0.445 0.408 1.197 0 1.615-0.406 0.418-4.695 4.502-4.695 4.502-0.217 0.223-0.502 0.335-0.787 0.335s-0.57-0.112-0.789-0.335c0 0-4.287-4.084-4.695-4.502s-0.436-1.17 0-1.615z" />
          </svg>
        </div>
        <input
          placeholder="Search..."
          className="w-[397px] h-[78px] bg-white rounded-[6px] border border-[#ccc] px-[15px] text-[29px] outline-none placeholder:text-[#adadb8]"
        />
      </div>
      <div className="mt-[30px] pl-[64px] pr-[71px] grid grid-cols-4 gap-[30px]">
        <Card><FirstLastHealth /></Card>
        <Card><NameLatex /></Card>
        <Card><FirstLastLight /></Card>
        <Card><JohnCena /></Card>
        <Card><MyName /></Card>
        <Card><NoName /></Card>
        <Card><Redacted /></Card>
      </div>
    </div>
  );
}
